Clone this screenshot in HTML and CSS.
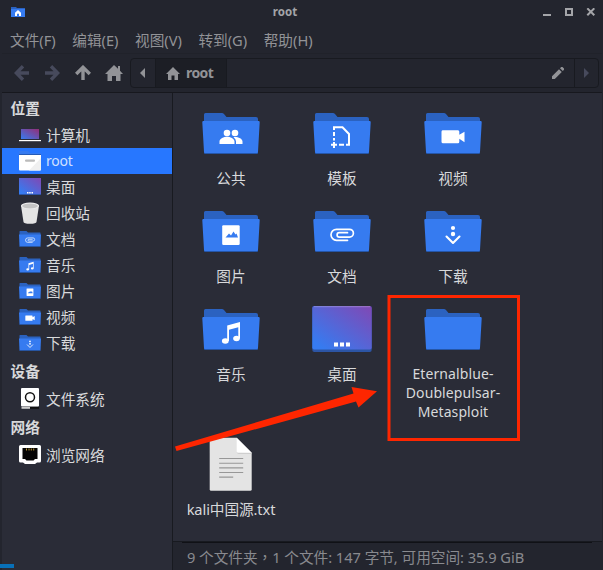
FILE: index.html
```
<!DOCTYPE html>
<html lang="zh-CN">
<head>
<meta charset="utf-8">
<title>root</title>
<link rel="stylesheet" href="styles.css">
</head>
<body>
<svg class="defs" width="0" height="0">
  <defs>
    <linearGradient id="desk" x1="0" y1="1" x2="1" y2="0"><stop offset="0.1" stop-color="#367bf0"/><stop offset="1" stop-color="#8148b4"/></linearGradient>
    <linearGradient id="comp" x1="0" y1="1" x2="1" y2="0"><stop offset="0" stop-color="#367bf0"/><stop offset="1" stop-color="#942d76"/></linearGradient>
    <symbol id="folder" viewBox="0 0 64 64">
      <path fill="#2b62c0" d="M5 22V12.500q0-1.500 1.500-1.500H23q1 0 2 1l2.500 3H57q2 0 2 2v6z"/>
      <path fill="#2556a8" d="M5 50h54v1q0 .900-1 .900H6q-1 0-1-.900z"/>
      <path fill="#367bf0" d="M4.300 19h55.400q1 0 1 1.200L59 50q-.100 1-1 1H6q-1 0-1-1L3.300 20.200q0-1.200 1-1.200z"/>
    </symbol>
    <symbol id="smallfolder" viewBox="0 0 22 22">
      <path fill="#2b62c0" d="M.5 8V3.500q0-.5.500-.5h6.500l1.500 1.500h12q.5 0 .5.500v3z"/>
      <path fill="#367bf0" d="M0 6.500h22L21.500 18.500H.5z"/><path fill="#2556a8" d="M.5 18.300h21v.7H.5z"/>
    </symbol>
    <symbol id="people" viewBox="0 0 64 64">
      <g fill="#fff"><circle cx="28" cy="31" r="3.300"/><circle cx="36" cy="31" r="3.300"/>
      <path d="M20.500 42v-2.500c0-3 4.500-4.700 7.500-4.700s7.500 1.700 7.500 4.700V42zM37 42v-2.500q0-2.500-2.500-4.300c3.500-.700 9 1.200 9 4.300V42z"/></g>
    </symbol>
    <symbol id="template" viewBox="0 0 64 64">
      <path fill="none" stroke="#fff" stroke-width="2" d="M24 28V25.200h8.500l6.500 6.800v10.700h-3M24 30v4M24 36v2.500M34 42.700h-5M21 42.700h6M24 40v6"/>
    </symbol>
    <symbol id="video" viewBox="0 0 64 64">
      <path fill="#fff" d="M21.500 28.200H37q1.300 0 1.300 1.500v3l5.200-3v10.600l-5.200-3.500v3q0 1.500-1.300 1.500H22q-1.500 0-1.500-1.500v-10Q20.500 28.200 21.500 28.200z"/>
    </symbol>
    <symbol id="picture" viewBox="0 0 64 64">
      <rect x="23.200" y="25.300" width="17.500" height="19.700" rx="1.200" fill="#fff"/>
      <path fill="#367bf0" d="M26.500 37.500l3.500-4 2 2 2.500-4 2 3 1-1 1.500 4z"/>
    </symbol>
    <symbol id="clip" viewBox="0 0 64 64">
      <path fill="none" stroke="#fff" stroke-width="1.700" stroke-linecap="round" d="M37.500 40.300H26.500a5.500 5.500 0 0 1 0-11H39.500a3.900 3.900 0 0 1 0 7.800H29.300a2.100 2.100 0 0 1 0-4.400H37.500"/>
    </symbol>
    <symbol id="download" viewBox="0 0 64 64">
      <g fill="#fff"><circle cx="32" cy="28" r="2.100"/><circle cx="32" cy="34" r="2.200"/></g>
      <path fill="none" stroke="#fff" stroke-width="2.100" stroke-linecap="round" stroke-linejoin="round" d="M25.500 36.500l6.500 6.500 6.500-6.500"/>
    </symbol>
    <symbol id="music" viewBox="0 0 64 64">
      <g fill="#fff"><ellipse cx="26.300" cy="43" rx="3.400" ry="2.700"/><ellipse cx="37.500" cy="40.500" rx="3.300" ry="2.700"/>
      <path d="M28.200 43V27.500L41 24v16.500h-1.700V29.200L30 31.700V43z"/></g>
    </symbol>
    <symbol id="desktop" viewBox="0 0 64 64">
      <rect x="2.300" y="8" width="59.400" height="46" rx="2" fill="#2c55a5"/>
      <rect x="2.300" y="8" width="59.400" height="43.500" rx="2" fill="url(#desk)"/>
      <path d="M4 8.700h56" stroke="#fff" stroke-opacity=".25"/>
      <path fill="#fff" d="M24 44.500h4v4h-4zm6 0h4v4h-4zm6 0h4v4h-4z"/>
    </symbol>
    <symbol id="textfile" viewBox="0 0 64 64">
      <g transform="translate(-.3 .7)"><path fill="#e4e4e4" d="M12.500 5H38l15 15v36.500q0 1.500-1.500 1.500h-39q-1.500 0-1.500-1.500V6.500Q11 5 12.500 5z"/>
      <path fill="#c8c8c8" d="M38 19q0 2 2 2h13v-1z"/><path fill="#fff" d="M38 5l15 15H39.500q-1.500 0-1.500-1.500z"/>
      <path stroke="#979797" stroke-width="1.100" d="M20.500 25.800h24M20.500 30.500h24M20.500 35.200h24M20.500 39.800h24M20.500 44.400h14"/></g>
    </symbol>
    <symbol id="house" viewBox="0 0 18 16">
      <path d="M9 0l4 3.800V1h2v4.700L18 9h-2.500v7H11v-5H7v5H2.500V9H0z"/>
    </symbol>
    <symbol id="arrow" viewBox="0 0 16 16">
      <path fill="none" stroke="currentColor" stroke-width="3.400" d="M15 8H3M9 1.200L2.300 8 9 14.800"/>
    </symbol>
  </defs>
</svg>

<div class="window">
  <header class="titlebar">
    <svg class="appicon" viewBox="0 0 14 10"><path fill="#2b62c0" d="M0 0h5l1 1h8v4H0z"/><path fill="#367bf0" d="M0 2h14v8H0z"/><path fill="#fff" d="M7 3l3 2.800V9H8V6.800H6V9H4V5.800z"/></svg>
    <span class="title">root</span>
    <svg class="controls" viewBox="0 0 54 10"><g fill="none" stroke="#a4a5a9" stroke-width="2"><path d="M1 7h8M24 1h6v6h-6z"/><path d="M45.300.300l7 7m0-7l-7 7"/></g></svg>
  </header>
  <nav class="menubar"><span>文件(F)</span><span>编辑(E)</span><span>视图(V)</span><span>转到(G)</span><span>帮助(H)</span></nav>
  <div class="toolbar">
    <svg class="nav dim" ><use href="#arrow"/></svg>
    <svg class="nav dim right"><use href="#arrow"/></svg>
    <svg class="nav up"><use href="#arrow"/></svg>
    <svg class="home"><use href="#house"/></svg>
    <div class="pathbar">
      <div class="seg prev"><svg viewBox="0 0 5 10"><path d="M5 0v10L0 5z"/></svg></div>
      <div class="seg current"><svg viewBox="0 0 14 13"><path d="M7 0l7 7h-2v6H8.500V8.500h-3V13H2V7H0z"/></svg><b>root</b></div>
      <svg class="pencil" viewBox="0 0 12 12"><path d="M0 9.200L7 2.200 9.800 5l-7 7H0zM8 1.200L9.200 0h1.300L12 1.500v1.300L10.800 4z"/></svg>
      <div class="seg next"><svg viewBox="0 0 5 10"><path d="M0 0v10l5-5z"/></svg></div>
    </div>
  </div>
  <div class="body">
    <aside class="sidebar">
      <h2>位置</h2>
      <div class="place"><svg viewBox="0 0 22 22"><path fill="url(#comp)" d="M2 5h18v10H2z"/><path fill="#fff" d="M0 16h22v1.200H0z"/></svg>计算机</div>
      <div class="place selected"><svg viewBox="0 0 22 22"><path fill="#367bf0" d="M0 1h9l2 2h11v4H0z"/><path fill="#245bb9" d="M0 4h22v1H0z"/><path fill="#fff" d="M0 5h22v14.500q0 1-1 1H1q-1 0-1-1z"/><path fill="#f0f0f0" d="M22 8v11.500q0 1-1 1H10z"/><rect x="6" y="9.500" width="10" height="2.300" rx="1" fill="#bbb"/></svg><span class="latin">root</span></div>
      <div class="place"><svg viewBox="0 0 22 22"><path fill="url(#desk)" d="M0 2h22v16H0z"/><path fill="#2c55a5" d="M0 18h22v1H0z"/><path fill="#fff" d="M8 16h1.500v1.500H8zm2.200 0h1.500v1.500h-1.500zm2.300 0H14v1.500h-1.500z"/></svg>桌面</div>
      <div class="place"><svg viewBox="0 0 22 22"><path fill="#e4e4e4" d="M2 3.500L4.500 20q.3 1.800 6.500 1.800t6.500-1.800L20 3.500z"/><ellipse cx="11" cy="3.700" rx="9" ry="3.200" fill="#f1f1f1"/><ellipse cx="11" cy="4" rx="7.800" ry="2.400" fill="#c4c4c4"/></svg>回收站</div>
      <div class="place"><svg viewBox="0 0 22 22"><use href="#smallfolder"/><use href="#clip" x="-2" y="-2" width="26" height="26"/></svg>文档</div>
      <div class="place"><svg viewBox="0 0 22 22"><use href="#smallfolder"/><use href="#music" x="-2" y="-2" width="26" height="26"/></svg>音乐</div>
      <div class="place"><svg viewBox="0 0 22 22"><use href="#smallfolder"/><use href="#picture" x="-1.500" y="-1.500" width="25" height="25"/></svg>图片</div>
      <div class="place"><svg viewBox="0 0 22 22"><use href="#smallfolder"/><use href="#video" x="-2" y="-2" width="26" height="26"/></svg>视频</div>
      <div class="place"><svg viewBox="0 0 22 22"><use href="#smallfolder"/><use href="#download" x="-2" y="-2" width="26" height="26"/></svg>下载</div>
      <h2>设备</h2>
      <div class="place"><svg viewBox="0 0 22 22"><rect x="2" y="0" width="18" height="18.500" rx="1" fill="#fff"/><path fill="#ccc" d="M2.500 19H11v1.800H2.500z"/><path fill="#111" d="M11 19h9v1.800h-9z"/><circle cx="11" cy="9.300" r="4.500" fill="none" stroke="#111" stroke-width="1.500"/></svg>文件系统</div>
      <h2>网络</h2>
      <div class="place"><svg viewBox="0 0 22 22"><path fill="#fff" d="M1.500 1h19Q22 1 22 2.500V17q0 1.500-1.500 1.500H18L16 20H6l-2-1.500H1.500Q0 18.500 0 17V2.500Q0 1 1.500 1z"/><path fill="#050505" d="M3.500 4h15v11H16l-1.500 1.500h-7L6 15H3.500z"/><path stroke="#b99432" d="M7.500 4.500v2M10 4.500v2M12.300 4.500v2M14.700 4.500v2"/></svg>浏览网络</div>
    </aside>
    <main class="content">
      <section class="files">
        <div class="item"><svg><use href="#folder"/><use href="#people"/></svg><span>公共</span></div>
        <div class="item"><svg><use href="#folder"/><use href="#template"/></svg><span>模板</span></div>
        <div class="item"><svg><use href="#folder"/><use href="#video"/></svg><span>视频</span></div>
        <div class="item"><svg><use href="#folder"/><use href="#picture"/></svg><span>图片</span></div>
        <div class="item"><svg><use href="#folder"/><use href="#clip"/></svg><span>文档</span></div>
        <div class="item"><svg><use href="#folder"/><use href="#download"/></svg><span>下载</span></div>
        <div class="item"><svg><use href="#folder"/><use href="#music"/></svg><span>音乐</span></div>
        <div class="item"><svg><use href="#desktop"/></svg><span>桌面</span></div>
        <div class="item"><svg><use href="#folder"/></svg><span class="name">Eternalblue-<br>Doublepulsar-<br>Metasploit</span></div>
        <div class="item"><svg><use href="#textfile"/></svg><span class="txt">kali中国源.txt</span></div>
      </section>
      <footer class="status"><span>9 个文件夹<i lang="zh-TW">，</i>1 个文件: 147 字节, 可用空间: 35.9 GiB</span></footer>
    </main>
  </div>
  <svg class="annotation" viewBox="0 0 603 570"><rect x="389" y="296.500" width="129.500" height="143" fill="none" stroke="#fe2600" stroke-width="3"/><path fill="#fe2600" d="M175 446.500L353.500 393.500 351.500 387 377 391.300 358.500 407.500 356 401.500 176.500 451z"/></svg>
  <div class="taskbar"></div>
</div>
</body>
</html>
```
FILE: styles.css
```
* { box-sizing: border-box; }
body { margin: 0; background: #23252e; }
.defs { position: absolute; }
.window {
  position: relative;
  display: flex;
  flex-direction: column;
  width: 603px;
  height: 570px;
  overflow: hidden;
  background: #23252e;
  color: #d8d9db;
  font: 14.67px/20px "Noto Sans", "Noto Sans CJK SC", sans-serif;
}
.titlebar {
  display: grid;
  grid-template-columns: 60px 1fr 60px;
  align-items: center;
  height: 24px;
  padding: 0 7px 0 11px;
}
.appicon { width: 14px; height: 10px; }
.title {
  margin-left: -37px;
  font-size: 11.5px;
  font-weight: 700;
  color: #a4a5a9;
  text-align: center;
}
.controls { width: 54px; height: 10px; margin-left: 6px; margin-top: 2px; }
.menubar {
  display: flex;
  gap: 16.5px;
  height: 30px;
  margin: 0 1px 0 2px;
  padding: 6px 0 0 8px;
  border-bottom: 1px solid #20222a;
  color: #929397;
}
.toolbar {
  display: flex;
  align-items: center;
  height: 38px;
  padding: 0 4px 0 14px;
  color: #929397;
}
.nav { width: 16px; height: 16px; margin-right: 14px; }
.dim { color: #474a5c; }
.right { transform: rotate(180deg); }
.up { margin: 0 13px 0 1px; transform: rotate(90deg); }
.home { width: 18px; height: 16px; margin: 0 7px 0 1px; fill: #929397; }
.pathbar {
  display: flex;
  flex: 1;
  align-items: center;
  height: 30px;
  border: 1px solid #181a20;
  border-radius: 4px;
  fill: #929397;
}
.seg { display: flex; align-items: center; height: 28px; }
.seg svg { width: 5px; height: 10px; }
.prev { width: 25px; padding-left: 9px; border-right: 1px solid #181a20; }
.current {
  width: 71px;
  padding-left: 10px;
  border-right: 1px solid #181a20;
  background: #1c1e25;
}
.current svg { width: 14px; height: 13px; margin-right: 6px; }
.current b { font-size: 14px; letter-spacing: -.6px; }
.pencil { width: 12px; height: 12px; margin: 0 10px 0 auto; }
.next { width: 24px; padding-left: 9px; border-left: 1px solid #181a20; fill: #474a5c; }
.body {
  display: flex;
  flex: 1;
  margin: 0 1px 0 2px;
  border-top: 1px solid #17181e;
}
.sidebar {
  width: 171px;
  border-right: 1px solid #181a20;
  background: #2a2c37;
}
.sidebar h2 {
  height: 30px;
  margin: 0;
  padding: 5px 0 0 8.5px;
  font-size: 14.67px;
  font-weight: 700;
}
.sidebar h2:first-child { height: 29px; }
.place { display: flex; align-items: center; height: 26px; padding-left: 17px; }
.place svg { width: 22px; height: 22px; margin-right: 5px; }
.selected { background: #2777ff; }
.latin { font-size: 14px; letter-spacing: -.2px; color: #d0e0ff; }
.content { display: flex; flex: 1; flex-direction: column; background: #2a2c37; }
.files {
  display: grid;
  grid-template-columns: repeat(3, 111px);
  grid-template-rows: 98px 98px 134px auto;
  flex: 1;
  padding: 9px 0 0 2.5px;
}
.item { display: flex; flex-direction: column; align-items: center; text-align: center; }
.item svg { width: 64px; height: 64px; flex: none; }
.item span { margin-top: 3px; line-height: 19px; }
.item .name { margin-top: 2px; font-size: 14px; letter-spacing: .1px; }
.item .txt { margin-top: 4px; letter-spacing: -.1px; }
.status {
  height: 29px;
  padding: 0 10px 0 9px;
  border-top: 1px solid #181a20;
  background: #23252e;
  color: #898a8f;
}
.status span {
  display: block;
  height: 27px;
  padding: 4px 0 0 5px;
  border-top: 1px solid #101116;
  letter-spacing: -.04px;
  white-space: nowrap;
}
.status i { font-family: "Noto Sans CJK TC", sans-serif; font-style: normal; line-height: 1; }
.annotation { position: absolute; inset: 0; width: 603px; height: 570px; }
.taskbar { position: absolute; left: 0; bottom: 2px; width: 14px; height: 4px; background: #0870b8; }
```
